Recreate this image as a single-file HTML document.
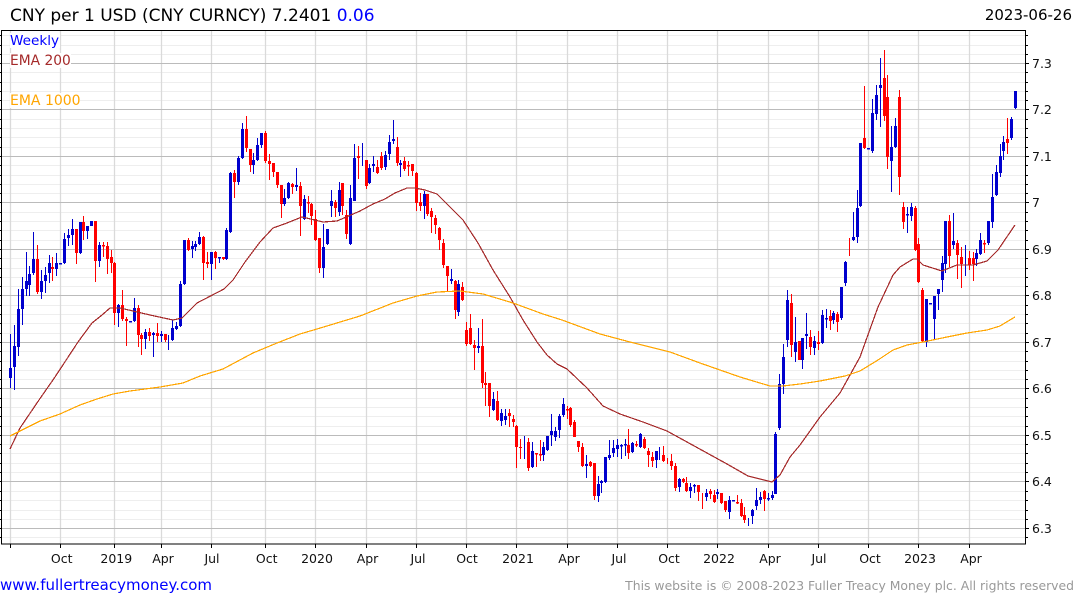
<!DOCTYPE html>
<html><head><meta charset="utf-8"><title>CNY per 1 USD</title>
<style>html,body{margin:0;padding:0;background:#fff}svg{display:block}text{font-family:"DejaVu Sans","Liberation Sans",sans-serif}</style>
</head><body>
<svg xmlns="http://www.w3.org/2000/svg" width="1075" height="600" viewBox="0 0 1075 600">
<rect width="1075" height="600" fill="#fff"/>
<path fill="none" stroke="#eee" d="M2 537.5H1025M2 519.5H1025M2 510.5H1025M2 500.5H1025M2 491.5H1025M2 472.5H1025M2 463.5H1025M2 453.5H1025M2 444.5H1025M2 426.5H1025M2 416.5H1025M2 407.5H1025M2 398.5H1025M2 379.5H1025M2 370.5H1025M2 361.5H1025M2 351.5H1025M2 333.5H1025M2 323.5H1025M2 314.5H1025M2 305.5H1025M2 286.5H1025M2 277.5H1025M2 268.5H1025M2 258.5H1025M2 240.5H1025M2 230.5H1025M2 221.5H1025M2 212.5H1025M2 193.5H1025M2 184.5H1025M2 175.5H1025M2 165.5H1025M2 147.5H1025M2 137.5H1025M2 128.5H1025M2 119.5H1025M2 100.5H1025M2 91.5H1025M2 82.5H1025M2 72.5H1025M2 54.5H1025M2 45.5H1025M2 35.5H1025"/>
<path fill="none" stroke="#dadada" stroke-width="1.3" d="M10.5 31V544M60.5 31V544M114.5 31V544M161.5 31V544M211.5 31V544M265.5 31V544M315.5 31V544M366.5 31V544M416.5 31V544M466.5 31V544M516.5 31V544M567.5 31V544M617.5 31V544M667.5 31V544M717.5 31V544M768.5 31V544M818.5 31V544M868.5 31V544M918.5 31V544M969.5 31V544"/>
<path fill="none" stroke="#bbb" d="M2 63.5H1025M2 109.5H1025M2 156.5H1025M2 202.5H1025M2 249.5H1025M2 295.5H1025M2 342.5H1025M2 388.5H1025M2 435.5H1025M2 481.5H1025M2 528.5H1025"/>
<rect x="10" y="33" width="50" height="15" fill="#fff"/><rect x="10" y="53" width="61" height="15" fill="#fff"/><rect x="10" y="93" width="70" height="15" fill="#fff"/>

<path fill="none" stroke="#0000cd" d="M10.5 334V388M14.5 325V390M18.5 289V356M22.5 277V325M26.5 252V296M29.5 266V296M33.5 232V275M41.5 270V299M45.5 267V293M49.5 255V283M56.5 253V276M64.5 233V264M68.5 229V246M72.5 219V245M80.5 222V254M87.5 226V239M99.5 242V267M118.5 304V327M134.5 298V322M145.5 329V349M153.5 332V357M161.5 331V342M168.5 335V350M172.5 320V341M176.5 322V330M180.5 281V327M184.5 240V285M192.5 241V258M195.5 241V251M199.5 232V245M211.5 252V280M219.5 257V263M226.5 228V260M230.5 172V233M238.5 156V185M242.5 123V159M253.5 153V174M257.5 138V161M261.5 133V148M284.5 189V206M288.5 182V199M296.5 168V191M304.5 195V220M323.5 224V278M327.5 229V245M331.5 190V217M339.5 182V216M350.5 185V245M354.5 144V201M362.5 143V166M369.5 164V184M373.5 156V172M385.5 151V170M389.5 135V160M393.5 120V144M400.5 160V177M424.5 191V219M451.5 269V284M458.5 280V316M478.5 328V353M493.5 392V411M501.5 409V426M505.5 409V425M524.5 436V459M532.5 442V468M543.5 442V461M547.5 436V451M551.5 414V446M555.5 427V441M559.5 414V438M563.5 398V417M586.5 455V478M598.5 476V502M601.5 480V493M605.5 457V483M609.5 440V460M613.5 440V457M617.5 439V457M621.5 444V459M625.5 439V456M632.5 442V453M640.5 433V448M656.5 451V468M659.5 447V460M679.5 478V492M690.5 483V498M694.5 484V493M706.5 489V501M717.5 489V499M729.5 496V519M748.5 518V526M752.5 509V524M756.5 488V510M760.5 492V504M768.5 493V501M772.5 491V500M775.5 432V494M779.5 374V430M783.5 344V394M787.5 290V347M795.5 317V362M802.5 338V369M806.5 313V349M814.5 336V355M822.5 310V344M826.5 309V328M833.5 311V324M841.5 287V320M845.5 261V286M853.5 212V241M857.5 190V243M860.5 143V207M872.5 99V153M876.5 85V120M880.5 58V127M891.5 126V192M895.5 118V148M907.5 207V233M911.5 203V221M926.5 299V347M934.5 296V340M938.5 289V310M942.5 256V292M945.5 221V273M953.5 213V249M965.5 245V276M976.5 249V266M980.5 233V255M988.5 221V245M992.5 174V228M996.5 165V196M1000.5 144V177M1003.5 136V160M1011.5 117V140M1015.5 91V109"/>
<path fill="none" stroke="#0000cd" stroke-width="3" d="M10.5 368V378M14.5 346V367M18.5 309V347M22.5 289V309M26.5 281V289M29.5 274V285M33.5 259V273M41.5 281V292M45.5 275V281M49.5 263V273M56.5 263V269M60.5 263V264.5M64.5 239V263M68.5 235V238M72.5 229V235M80.5 222V253M87.5 226V231M91.5 221V226M99.5 245V261M118.5 305V313M130.5 321V322.5M134.5 308V321M145.5 332V339M153.5 333V335M161.5 334V336M172.5 328V340M176.5 326V329M180.5 284V326M184.5 240V284M192.5 246V249M195.5 244V247M199.5 237V244M211.5 252V264M219.5 257V258.5M226.5 230V259M230.5 173V232M238.5 158V182M242.5 129V158M253.5 160V165M257.5 145V160M261.5 133V145M284.5 198V204M288.5 183V198M296.5 185V187M304.5 199V219M323.5 247V268M327.5 229V244M331.5 201V206M339.5 190V212M350.5 198V244M354.5 158V201M369.5 168V183M373.5 164V166M385.5 155V167M389.5 142V154M393.5 139V141M400.5 163V165M424.5 194V206M451.5 279V281M458.5 284V312M478.5 346V348M493.5 399V410M501.5 413V421M505.5 416V420M532.5 451V467M543.5 447V455M547.5 436V450M551.5 431V435M555.5 431V437M559.5 416V430M563.5 404V415M586.5 464V466M598.5 484V496M601.5 481V483M605.5 457V482M609.5 455V458M613.5 448V453M617.5 445V449M621.5 445V446.5M625.5 444V445.5M632.5 443V452M640.5 434V447M656.5 451V460M679.5 479V487M690.5 487V491M694.5 485V486.5M706.5 493V497M717.5 492V494M729.5 500V512M733.5 500V501.5M752.5 510V516M756.5 500V506M760.5 497V500M768.5 498V499.5M772.5 495V498M775.5 434V494M779.5 384V428M783.5 357V384M787.5 300V340M795.5 342V352M802.5 338V360M806.5 334V336M814.5 341V348M822.5 315V343M826.5 318V319.5M833.5 313V320M841.5 287V318M845.5 262V283M853.5 237V240M857.5 208V237M860.5 143V206M868.5 148V149.5M872.5 113V151M876.5 95V114M880.5 85V88M891.5 147V161M895.5 126V147M907.5 214V215.5M911.5 207V216M926.5 299V342M930.5 303V304.5M934.5 296V319M938.5 289V294M942.5 263V280M945.5 221V264M953.5 241V245M976.5 253V259M980.5 240V254M988.5 221V243M992.5 197V222M996.5 172V195M1000.5 156V173M1003.5 142V151M1011.5 119V138M1015.5 91V108"/>
<path fill="none" stroke="#f00" d="M37.5 245V294M52.5 257V281M76.5 229V264M83.5 216V240M95.5 221V282M103.5 242V257M107.5 242V274M111.5 250V273M114.5 262V325M122.5 290V321M126.5 317V346M138.5 305V347M141.5 333V355M149.5 328V341M157.5 323V342M165.5 334V342M188.5 238V251M203.5 236V280M207.5 252V268M215.5 251V269M223.5 257V260M234.5 170V198M246.5 116V152M250.5 149V172M265.5 131V163M269.5 154V180M273.5 163V177M277.5 172V188M281.5 185V218M292.5 183V194M300.5 182V236M308.5 196V213M311.5 203V225M315.5 210V241M319.5 238V273M335.5 200V217M342.5 183V215M346.5 210V239M358.5 146V179M366.5 160V189M377.5 160V174M381.5 152V170M397.5 137V166M404.5 157V171M408.5 161V176M412.5 164V176M416.5 172V211M420.5 193V211M427.5 194V216M431.5 208V233M435.5 215V234M439.5 227V250M443.5 239V268M447.5 266V291M455.5 280V319M462.5 282V301M466.5 322V346M470.5 314V345M474.5 340V370M482.5 319V388M485.5 372V406M489.5 383V417M497.5 391V421M509.5 409V427M513.5 415V427M516.5 425V468M520.5 439V459M528.5 438V471M536.5 453V467M540.5 440V461M567.5 406V419M570.5 407V427M574.5 420V437M578.5 441V452M582.5 443V467M590.5 461V467M594.5 463V500M628.5 429V459M636.5 441V447M644.5 437V449M648.5 448V467M652.5 452V467M663.5 446V462M667.5 458V464M671.5 454V470M675.5 463V491M683.5 478V483M686.5 477V492M698.5 485V501M702.5 493V509M710.5 489V499M714.5 490V503M721.5 493V504M725.5 501V512M737.5 495V504M741.5 499V517M744.5 507V523M764.5 490V511M791.5 294V357M799.5 341V360M810.5 330V355M818.5 331V350M830.5 310V330M837.5 312V332M849.5 238V256M864.5 86V149M884.5 50V121M887.5 75V169M899.5 90V195M903.5 202V229M915.5 206V251M918.5 238V283M922.5 288V342M949.5 215V267M957.5 240V279M961.5 247V288M969.5 251V270M973.5 252V281M984.5 240V253M1007.5 118V154"/>
<path fill="none" stroke="#f00" stroke-width="3" d="M37.5 259V292M52.5 267V269M76.5 229V253M83.5 222V231M95.5 221V261M103.5 245V246.5M107.5 246V259M111.5 257V263M114.5 263V313M122.5 305V319M126.5 319V321M138.5 308V335M141.5 335V339M149.5 332V336M157.5 333V336M165.5 334V340M188.5 240V250M203.5 237V263M207.5 262V264M215.5 252V258M223.5 257V259M234.5 173V182M246.5 129V148M250.5 149V165M265.5 133V161M269.5 161V164M273.5 163V172M277.5 172V185M281.5 185V204M292.5 184V187M300.5 186V206M308.5 202V203.5M311.5 204V216M315.5 219V240M319.5 238V268M335.5 202V208M342.5 183V206M346.5 215V234M358.5 156V158M366.5 160V186M377.5 167V173M381.5 156V168M397.5 147V163M404.5 161V169M408.5 165V166.5M412.5 164V171M416.5 173V203M420.5 202V206M427.5 194V214M431.5 211V217M435.5 218V225M439.5 228V240M443.5 243V265M447.5 266V276M455.5 281V310M462.5 287V300M466.5 330V344M470.5 328V344M474.5 345V348M482.5 346V383M485.5 383V385M489.5 383V406M497.5 401V420M509.5 413V416M513.5 419V422M516.5 426V447M520.5 447V448M528.5 442V468M536.5 453V454.5M540.5 454V455.5M567.5 409V410.5M570.5 408V425M574.5 422V437M578.5 441V447M582.5 447V466M590.5 462V466M594.5 463V496M628.5 445V453M636.5 444V445.5M644.5 439V448M648.5 451V455M652.5 457V461M663.5 455V461M671.5 461V466M675.5 466V488M683.5 479V482M686.5 483V491M698.5 485V492M710.5 491V494M714.5 495V502M721.5 493V503M725.5 501V510M737.5 502V503.5M741.5 503V516M744.5 515V520M764.5 491V499M791.5 303V345M799.5 341V360M810.5 337V347M818.5 342V344M830.5 316V321M837.5 314V322M864.5 138V148M884.5 78V116M887.5 97V157M899.5 97V177M903.5 207V222M915.5 208V250M918.5 244V282M922.5 290V341M949.5 221V256M957.5 243V255M961.5 257V264M969.5 258V265M973.5 258V264M984.5 243V244.5M1007.5 139V143"/>

<path fill="none" stroke="#a52a2a" stroke-width="1.2" shape-rendering="crispEdges" d="M10 449L20 428L39 400L55 377L78 342L92 323L102 315L110 308L120 308L133 311L150 315L173 320L182 318L197 303L224 289L233 280L245 262L260 242L273 228L287 223L302 217L323 222L337 221L360 211L373 204L385 199L395 193L407 188L415 188L425 190L437 194L453 210L463 220L478 243L493 270L510 297L523 320L537 342L547 355L557 364L567 369L587 388L603 406L620 414L643 422L667 431L687 442L707 453L727 464L748 476L772 482L780 475L790 457L800 445L820 417L840 393L860 357L878 307L893 275L900 267L913 259L917 259L923 265L942 271L957 265L973 265L987 261L998 250L1015 225"/>
<path fill="none" stroke="#ffa500" stroke-width="1.2" shape-rendering="crispEdges" d="M10 436L40 421L60 414L80 405L97 399L113 394L130 391L160 387L183 383L200 376L223 369L253 353L277 343L300 334L317 329L360 316L393 303L417 296L437 292L460 291L483 294L513 303L543 314L562 320L600 334L630 342L670 352L700 363L740 377L770 386L783 386L800 384L820 381L845 376L860 371L878 360L893 350L907 345L923 342L947 337L967 333L987 330L1000 326L1015 317"/>

<rect x="1.5" y="30.5" width="1024" height="513.5" fill="none" stroke="#000"/>
<path fill="none" stroke="#000" d="M1026 35.5h2M1026 45.5h2M1026 54.5h2M1026 63.5h3M1026 72.5h2M1026 82.5h2M1026 91.5h2M1026 100.5h2M1026 109.5h3M1026 119.5h2M1026 128.5h2M1026 137.5h2M1026 147.5h2M1026 156.5h3M1026 165.5h2M1026 175.5h2M1026 184.5h2M1026 193.5h2M1026 202.5h3M1026 212.5h2M1026 221.5h2M1026 230.5h2M1026 240.5h2M1026 249.5h3M1026 258.5h2M1026 268.5h2M1026 277.5h2M1026 286.5h2M1026 295.5h3M1026 305.5h2M1026 314.5h2M1026 323.5h2M1026 333.5h2M1026 342.5h3M1026 351.5h2M1026 361.5h2M1026 370.5h2M1026 379.5h2M1026 388.5h3M1026 398.5h2M1026 407.5h2M1026 416.5h2M1026 426.5h2M1026 435.5h3M1026 444.5h2M1026 453.5h2M1026 463.5h2M1026 472.5h2M1026 481.5h3M1026 491.5h2M1026 500.5h2M1026 510.5h2M1026 519.5h2M1026 528.5h3M1026 537.5h2"/>
<path fill="none" stroke="#000" d="M0 35.5h1M0 45.5h1M0 54.5h1M0 63.5h1M0 72.5h1M0 82.5h1M0 91.5h1M0 100.5h1M0 109.5h1M0 119.5h1M0 128.5h1M0 137.5h1M0 147.5h1M0 156.5h1M0 165.5h1M0 175.5h1M0 184.5h1M0 193.5h1M0 202.5h1M0 212.5h1M0 221.5h1M0 230.5h1M0 240.5h1M0 249.5h1M0 258.5h1M0 268.5h1M0 277.5h1M0 286.5h1M0 295.5h1M0 305.5h1M0 314.5h1M0 323.5h1M0 333.5h1M0 342.5h1M0 351.5h1M0 361.5h1M0 370.5h1M0 379.5h1M0 388.5h1M0 398.5h1M0 407.5h1M0 416.5h1M0 426.5h1M0 435.5h1M0 444.5h1M0 453.5h1M0 463.5h1M0 472.5h1M0 481.5h1M0 491.5h1M0 500.5h1M0 510.5h1M0 519.5h1M0 528.5h1M0 537.5h1"/>
<path fill="none" stroke="#000" d="M10.5 544v4M60.5 544v4M114.5 544v4M161.5 544v4M211.5 544v4M265.5 544v4M315.5 544v4M366.5 544v4M416.5 544v4M466.5 544v4M516.5 544v4M567.5 544v4M617.5 544v4M667.5 544v4M717.5 544v4M768.5 544v4M818.5 544v4M868.5 544v4M918.5 544v4M969.5 544v4"/>

<text x="10" y="21" font-size="17" fill="#000">CNY per 1 USD (CNY CURNCY) 7.2401 <tspan fill="#00f">0.06</tspan></text>
<text x="1072" y="20" font-size="15" fill="#000" text-anchor="end">2023-06-26</text>
<text x="10" y="45" font-size="13.6" fill="#00f">Weekly</text>
<text x="10" y="65" font-size="13.8" fill="#a52a2a">EMA 200</text>
<text x="10" y="105" font-size="14" fill="#ffa500">EMA 1000</text>

<g font-size="12.5" fill="#111">
<text x="1032" y="68">7.3</text><text x="1032" y="114">7.2</text><text x="1032" y="161">7.1</text><text x="1032" y="207">7</text><text x="1032" y="254">6.9</text><text x="1032" y="300">6.8</text><text x="1032" y="347">6.7</text><text x="1032" y="393">6.6</text><text x="1032" y="440">6.5</text><text x="1032" y="486">6.4</text><text x="1032" y="533">6.3</text>
</g>
<g font-size="12.5" fill="#111" text-anchor="middle">
<text x="61.7" y="563">Oct</text><text x="116.3" y="563">2019</text><text x="163" y="563">Apr</text><text x="212" y="563">Jul</text><text x="266.7" y="563">Oct</text><text x="317" y="563">2020</text><text x="367.5" y="563">Apr</text><text x="418" y="563">Jul</text><text x="467" y="563">Oct</text><text x="518" y="563">2021</text><text x="569" y="563">Apr</text><text x="619" y="563">Jul</text><text x="669" y="563">Oct</text><text x="719" y="563">2022</text><text x="770" y="563">Apr</text><text x="819" y="563">Jul</text><text x="870" y="563">Oct</text><text x="920" y="563">2023</text><text x="971" y="563">Apr</text>
</g>
<text x="0" y="590" font-size="15" fill="#00f">www.fullertreacymoney.com</text>
<text x="1074" y="590" font-size="12.4" fill="#999" text-anchor="end">This website is © 2008-2023 Fuller Treacy Money plc. All rights reserved</text>
</svg>
</body></html>
